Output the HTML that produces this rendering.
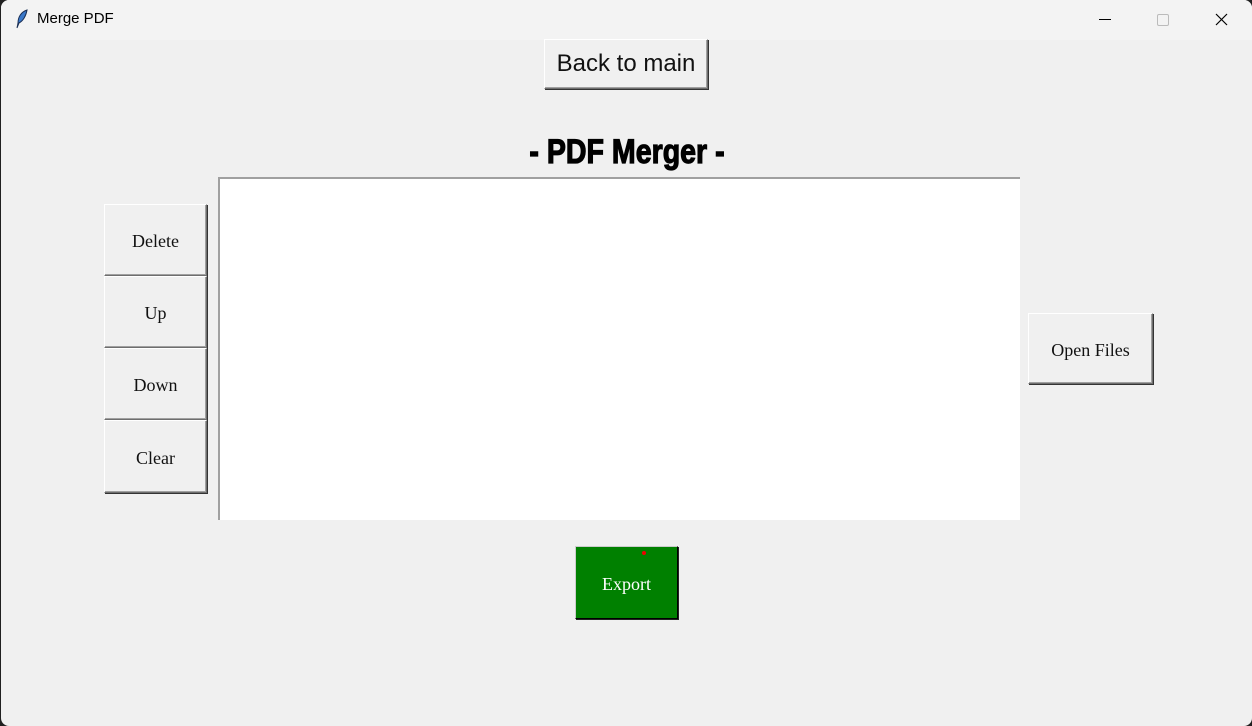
<!DOCTYPE html>
<html><head><meta charset="utf-8"><style>
html,body{margin:0;padding:0;width:1252px;height:726px;overflow:hidden;background:#202020;}
.win{position:absolute;left:1px;top:0;width:1251px;height:726px;background:#f0f0f0;border-radius:8px;overflow:hidden;}
.title{position:absolute;left:0;top:0;width:100%;height:40px;background:#f3f3f3;}
.title span{position:absolute;left:36px;top:10px;font:15px "Liberation Sans",sans-serif;color:#000;}
.btn{position:absolute;box-sizing:border-box;background:#f0f0f0;border:1px solid;border-color:#fff #6e6e6e #6e6e6e #fff;box-shadow:inset -1px -1px 0 #a0a0a0, 1px 1px 0 #333;display:flex;align-items:center;justify-content:center;padding-top:3px;font:18px "Liberation Serif",serif;color:#111;}
.ab{position:absolute;font-family:"Liberation Sans",sans-serif;}
</style></head><body>
<div class="win">
<div class="title">
<svg style="position:absolute;left:14px;top:9px" width="14" height="20" viewBox="0 0 14 20"><path d="M12 1 C6 3 3 8 3 14 L2 19 L4 14 C8 12 11 7 12 1Z" fill="#3a78c9" stroke="#1a2f55" stroke-width="1"/></svg>
<span>Merge PDF</span>
<div class="ab" style="left:1098px;top:19px;width:12px;height:1px;background:#000"></div>
<div class="ab" style="left:1156px;top:14px;width:10px;height:10px;border:1px solid #bbb;border-radius:2px"></div>
<svg style="position:absolute;left:1214px;top:13px" width="13" height="13"><path d="M1 1L12 12M12 1L1 12" stroke="#000" stroke-width="1.2"/></svg>
</div>
<div class="btn" style="left:543px;top:39px;width:164px;height:50px;font:24px 'Liberation Sans',sans-serif;padding-top:0;">Back to main</div>
<div class="ab" style="left:426px;top:133px;width:400px;text-align:center;font-size:34px;font-weight:bold;transform:scaleX(0.84);color:#000;-webkit-text-stroke:1.2px #000;font-family:'Liberation Sans Narrow','Liberation Sans',sans-serif;">- PDF Merger -</div>
<div class="ab" style="left:217px;top:177px;width:802px;height:343px;background:#fff;border-top:2px solid #a0a0a0;border-left:2px solid #a0a0a0;box-sizing:border-box;"></div>
<div class="btn" style="left:103px;top:204px;width:103px;height:72px;">Delete</div>
<div class="btn" style="left:103px;top:276px;width:103px;height:72px;">Up</div>
<div class="btn" style="left:103px;top:348px;width:103px;height:72px;">Down</div>
<div class="btn" style="left:103px;top:420px;width:103px;height:73px;">Clear</div>
<div class="btn" style="left:1027px;top:313px;width:125px;height:71px;">Open Files</div>
<div class="btn" style="left:574px;top:546px;width:103px;height:73px;background:#008000;color:#fff;border-color:#ccc #000 #000 #ccc;box-shadow:1px 1px 0 #222;">Export</div>
<div class="ab" style="left:641px;top:551px;width:4px;height:4px;border-radius:2px;background:#e00"></div>
</div>
</body></html>
